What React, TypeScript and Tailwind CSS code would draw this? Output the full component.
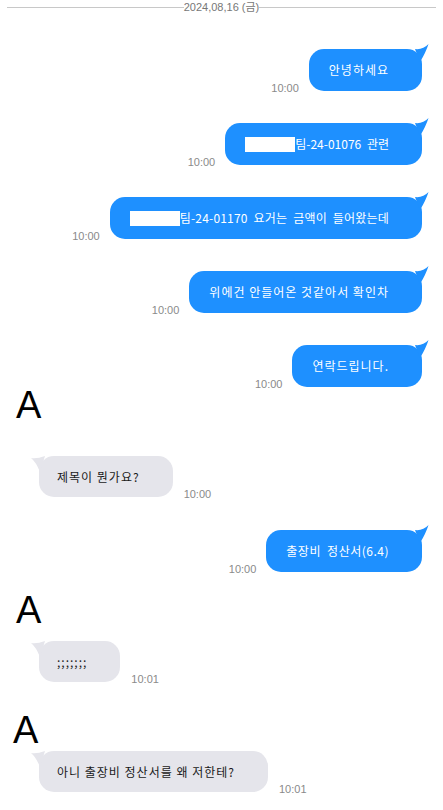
import React from 'react';

type Msg =
  | { kind: 'out'; text: React.ReactNode; time: string; mt: string; sp?: string }
  | { kind: 'in'; text: React.ReactNode; time: string; mt: string; sp?: string }
  | { kind: 'avatar'; mt: string; pl: string };

const korean = '"Noto Sans CJK KR", "Noto Sans", sans-serif';

// hangul lines get a little extra tracking, number lines keep word spacing instead
const hangulSp = 'tracking-[1px]';
const numberSp = 'tracking-[0.2px] [word-spacing:3px]';

// white blot hiding part of a document number
const Blot = ({ w }: { w: string }) => (
  <span className={`inline-block ${w} h-[15px] bg-white align-middle -mt-[2px]`} />
);

const messages: Msg[] = [
  { kind: 'out', text: '안녕하세요', time: '10:00', mt: 'mt-[35px]' },
  {
    kind: 'out',
    text: (
      <>
        <Blot w="w-[50px]" />
        팀-24-01076 관련
      </>
    ),
    time: '10:00',
    mt: 'mt-8',
    sp: '[word-spacing:3px]',
  },
  {
    kind: 'out',
    text: (
      <>
        <Blot w="w-[50px]" />
        팀-24-01170 요거는 금액이 들어왔는데
      </>
    ),
    time: '10:00',
    mt: 'mt-8',
    sp: numberSp,
  },
  { kind: 'out', text: '위에건 안들어온 것같아서 확인차', time: '10:00', mt: 'mt-8' },
  { kind: 'out', text: '연락드립니다.', time: '10:00', mt: 'mt-8' },
  { kind: 'avatar', mt: 'mt-[5px]', pl: 'pl-4' },
  { kind: 'in', text: '제목이 뭔가요?', time: '10:00', mt: 'mt-[37px]' },
  {
    kind: 'out',
    text: '출장비 정산서(6.4)',
    time: '10:00',
    mt: 'mt-[33px]',
    sp: 'tracking-[0.5px] [word-spacing:3px]',
  },
  { kind: 'avatar', mt: 'mt-[25px]', pl: 'pl-4' },
  { kind: 'in', text: ';;;;;;;', time: '10:01', mt: 'mt-[17px]' },
  { kind: 'avatar', mt: 'mt-[35px]', pl: 'pl-[13px]' },
  { kind: 'in', text: '아니 출장비 정산서를 왜 저한테?', time: '10:01', mt: 'mt-[7px]' },
];

function Time({ t }: { t: string }) {
  return (
    <span
      className="text-[11px] leading-none text-[#8a8a8a] -mb-[3px]"
      style={{ fontFamily: '"Liberation Sans", Arial, sans-serif' }}
    >
      {t}
    </span>
  );
}

function Outgoing({ text, time, sp }: { text: React.ReactNode; time: string; sp: string }) {
  return (
    <div className="flex items-end justify-end gap-[10px] pr-[21px]">
      <Time t={time} />
      <div
        className={`relative h-[42px] flex items-center pl-5 pr-[33px] rounded-[15px] bg-[#1e90ff] text-white text-[12px] whitespace-nowrap ${sp}`}
        style={{ fontFamily: korean }}
      >
        <svg
          className="absolute -right-[7px] -top-[5px] overflow-visible"
          width="14"
          height="18"
          viewBox="0 0 14 18"
        >
          <path d="M0 5 Q8 6 13.5 0 Q11 8 5 18 Z" fill="#1e90ff" />
        </svg>
        <span className="relative">{text}</span>
      </div>
    </div>
  );
}

function Incoming({ text, time, sp }: { text: React.ReactNode; time: string; sp: string }) {
  return (
    <div className="flex items-end gap-[11px] pl-[39px]">
      <div
        className={`relative h-[41px] flex items-center pl-[18px] pr-[33px] rounded-[15px] bg-[#e5e5eb] text-[#1a1a1a] text-[12px] whitespace-nowrap ${sp}`}
        style={{ fontFamily: korean }}
      >
        <svg
          className="absolute -left-[8px] -top-[2px] overflow-visible"
          width="16"
          height="18"
          viewBox="0 0 16 18"
        >
          <path d="M14 2 Q6 5 0 4 Q5 8 9 18 Z" fill="#e5e5eb" />
        </svg>
        <span className="relative">{text}</span>
      </div>
      <Time t={time} />
    </div>
  );
}

export default function App() {
  return (
    <div className="w-[443px] h-[810px] bg-white overflow-hidden flex flex-col">
      {/* date divider */}
      <div className="flex items-center h-[14px] px-[7px]">
        <div className="flex-1 h-px bg-[#c8c8c8]" />
        <span
          className="text-[11px] leading-none text-[#777]"
          style={{ fontFamily: '"Liberation Sans", "Noto Sans CJK KR", sans-serif' }}
        >
          2024,08,16 (금)
        </span>
        <div className="flex-1 h-px bg-[#c8c8c8]" />
      </div>

      {messages.map((m, i) => {
        if (m.kind === 'avatar') {
          return (
            <div
              key={i}
              className={`${m.mt} ${m.pl} h-[27px] text-[38px] leading-[27px] text-black`}
              style={{ fontFamily: '"Liberation Sans", Arial, sans-serif' }}
            >
              A
            </div>
          );
        }
        const sp = m.sp ?? hangulSp;
        return (
          <div key={i} className={m.mt}>
            {m.kind === 'out' ? (
              <Outgoing text={m.text} time={m.time} sp={sp} />
            ) : (
              <Incoming text={m.text} time={m.time} sp={sp} />
            )}
          </div>
        );
      })}
    </div>
  );
}
